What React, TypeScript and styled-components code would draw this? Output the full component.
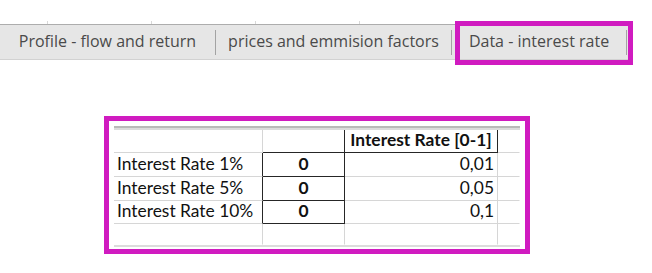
import React from "react";
import styled, { createGlobalStyle } from "styled-components";

const GlobalStyle = createGlobalStyle`
  html, body {
    margin: 0;
    padding: 0;
    background: #ffffff;
  }
  body {
    font-family: "Open Sans", "Noto Sans", sans-serif;
  }
`;

type Line = "dark" | "light" | "none";

interface CellDef {
  text?: string;
  right: Line;
  bottom: Line;
  align?: "left" | "center" | "right";
  bold?: boolean;
}

const lineColor = (l: Line) =>
  l === "dark" ? "#262626" : l === "light" ? "#d6d6d6" : "transparent";

const tabs = [
  { label: "Profile - flow and return", width: 215 },
  { label: "prices and emmision factors", width: 235 },
  { label: "Data - interest rate", width: 174, active: true },
];

const labels = ["Interest Rate 1%", "Interest Rate 5%", "Interest Rate 10%"];
const values = ["0,01", "0,05", "0,1"];

const rows: CellDef[][] = [
  [
    { right: "light", bottom: "light" },
    { right: "dark", bottom: "dark" },
    { text: "Interest Rate [0-1]", right: "dark", bottom: "dark", align: "center", bold: true },
    { right: "none", bottom: "light" },
  ],
  ...labels.map((label, i): CellDef[] => [
    { text: label, right: "dark", bottom: "light" },
    { text: "0", right: "dark", bottom: "dark", align: "center", bold: true },
    { text: values[i], right: "light", bottom: "light", align: "right" },
    { right: "none", bottom: "light" },
  ]),
  [
    { right: "light", bottom: "none" },
    { right: "light", bottom: "none" },
    { right: "light", bottom: "none" },
    { right: "none", bottom: "none" },
  ],
];

const rowHeights = [23, 24, 24, 23, 21];

export default function App() {
  return (
    <Page>
      <GlobalStyle />
      <SheetEdge />
      <TabBar>
        {tabs.map((t) => (
          <React.Fragment key={t.label}>
            <Tab $width={t.width} $active={!!t.active}>
              {t.label}
            </Tab>
            <Divider />
          </React.Fragment>
        ))}
      </TabBar>

      <Frame>
        <TopRule />
        <Grid>
          {rows.map((row, r) =>
            row.map((c, ci) => (
              <Cell
                key={`${r}-${ci}`}
                $right={c.right}
                $bottom={c.bottom}
                $align={c.align || "left"}
                $bold={!!c.bold}
                style={{ height: rowHeights[r] }}
              >
                {c.text}
              </Cell>
            ))
          )}
        </Grid>
        <BottomRule />
      </Frame>
    </Page>
  );
}

const Page = styled.div`
  width: 652px;
  height: 273px;
  display: flex;
  flex-direction: column;
  overflow: hidden;
`;

const SheetEdge = styled.div`
  height: 24px;
  background: repeating-linear-gradient(
      to right,
      transparent 0 47px,
      #d8d8d8 47px 48px,
      transparent 48px 104px
    )
    left bottom / 628px 3px no-repeat;
`;

const TabBar = styled.div`
  width: 628px;
  height: 34px;
  display: flex;
  align-items: center;
  background: #e6e6e6;
  border-top: 1px solid #adadad;
  border-bottom: 1px solid #d2d2d2;
`;

const Tab = styled.div<{ $width: number; $active: boolean }>`
  position: relative;
  width: ${(p) => p.$width}px;
  height: 100%;
  display: flex;
  align-items: center;
  justify-content: center;
  padding-bottom: 2px;
  box-sizing: border-box;
  font-size: 16px;
  color: #4a4a4a;
  white-space: nowrap;

  ${(p) =>
    p.$active &&
    `
    &::after {
      content: "";
      position: absolute;
      left: 3px;
      top: -4px;
      width: 178px;
      height: 44px;
      box-sizing: border-box;
      border: 5px solid #d01bc0;
    }
  `}
`;

const Divider = styled.div`
  width: 1px;
  height: 25px;
  background: #a3a3a3;
`;

const Frame = styled.div`
  margin: 56px 0 0 104px;
  width: 426px;
  height: 138px;
  box-sizing: border-box;
  border: 5px solid #d01bc0;
  padding: 5px 5px 2px 5px;
  display: flex;
  flex-direction: column;
`;

const TopRule = styled.div`
  height: 4px;
  background: linear-gradient(to bottom, #b9b9b9 0 2px, #dcdcdc 2px 4px);
`;

const Grid = styled.div`
  display: grid;
  grid-template-columns: 149px 82px 153px 22px;
  font-family: Lato, "Liberation Sans", sans-serif;
  font-size: 17.4px;
  color: #111111;
`;

const Cell = styled.div<{
  $right: Line;
  $bottom: Line;
  $align: "left" | "center" | "right";
  $bold: boolean;
}>`
  box-sizing: border-box;
  display: flex;
  align-items: flex-end;
  justify-content: ${(p) =>
    p.$align === "center" ? "center" : p.$align === "right" ? "flex-end" : "flex-start"};
  padding: 0 3px 2px 3px;
  line-height: 20px;
  white-space: nowrap;
  font-weight: ${(p) => (p.$bold ? 700 : 400)};
  border-right: 1px solid ${(p) => lineColor(p.$right)};
  border-bottom: 1px solid ${(p) => lineColor(p.$bottom)};
`;

const BottomRule = styled.div`
  height: 2px;
  background: #dcdcdc;
`;
